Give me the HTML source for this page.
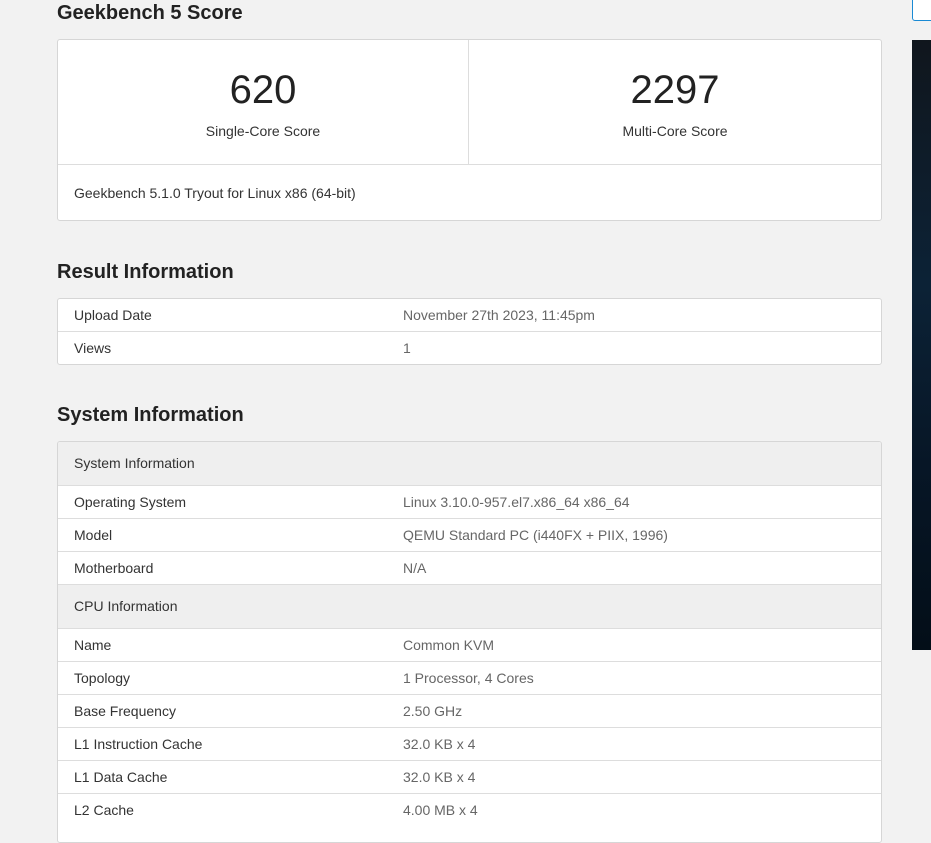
<!DOCTYPE html>
<html><head><style>
body{margin:0;width:931px;height:824px;overflow:hidden;background:#f2f2f2;font-family:"Liberation Sans",Arial,sans-serif;color:#333;position:relative}
.a{position:absolute}
h2{position:absolute;margin:0;font-size:20px;font-weight:bold;color:#222;left:57px}
.panel{position:absolute;left:57px;width:823px;background:#fff;border:1px solid #d6d6d6;border-radius:3px;overflow:hidden}
.row{position:relative;height:32px;border-top:1px solid #ddd;font-size:14px;line-height:32px}
.row:first-child{border-top:none}
.row .l{position:absolute;left:16px}
.row .v{position:absolute;left:345px;color:#666}
.hd{height:43px;line-height:43px;background:#efefef}
</style></head><body>
<h2 style="top:2px">Geekbench 5 Score</h2>
<div class="panel" style="top:39px;height:180px">
  <div class="a" style="left:0;top:0;width:410px;height:124px;border-right:1px solid #ddd;text-align:center">
    <div style="font-size:40px;margin-top:27px;line-height:46px;color:#222">620</div>
    <div style="font-size:14px;margin-top:10px">Single-Core Score</div>
  </div>
  <div class="a" style="left:411px;top:0;width:412px;height:124px;text-align:center">
    <div style="font-size:40px;margin-top:27px;line-height:46px;color:#222">2297</div>
    <div style="font-size:14px;margin-top:10px">Multi-Core Score</div>
  </div>
  <div class="a" style="left:0;top:124px;width:823px;border-top:1px solid #ddd;height:55px;line-height:56px;font-size:14px;padding-left:16px">Geekbench 5.1.0 Tryout for Linux x86 (64-bit)</div>
</div>
<h2 style="top:261px">Result Information</h2>
<div class="panel" style="top:298px">
  <div class="row"><span class="l">Upload Date</span><span class="v">November 27th 2023, 11:45pm</span></div>
  <div class="row"><span class="l">Views</span><span class="v">1</span></div>
</div>
<h2 style="top:404px">System Information</h2>
<div class="panel" style="top:441px;height:400px">
  <div class="row hd"><span class="l">System Information</span></div>
  <div class="row"><span class="l">Operating System</span><span class="v">Linux 3.10.0-957.el7.x86_64 x86_64</span></div>
  <div class="row"><span class="l">Model</span><span class="v">QEMU Standard PC (i440FX + PIIX, 1996)</span></div>
  <div class="row"><span class="l">Motherboard</span><span class="v">N/A</span></div>
  <div class="row hd"><span class="l">CPU Information</span></div>
  <div class="row"><span class="l">Name</span><span class="v">Common KVM</span></div>
  <div class="row"><span class="l">Topology</span><span class="v">1 Processor, 4 Cores</span></div>
  <div class="row"><span class="l">Base Frequency</span><span class="v">2.50 GHz</span></div>
  <div class="row"><span class="l">L1 Instruction Cache</span><span class="v">32.0 KB x 4</span></div>
  <div class="row"><span class="l">L1 Data Cache</span><span class="v">32.0 KB x 4</span></div>
  <div class="row"><span class="l">L2 Cache</span><span class="v">4.00 MB x 4</span></div>
</div>
<div class="a" style="left:912px;top:-3px;width:30px;height:22px;border:1px solid #1a8ad4;border-radius:3px;background:#fff"></div>
<div class="a" style="left:912px;top:40px;width:19px;height:610px;background:linear-gradient(180deg,#10161d 0%,#0c2236 40%,#071626 70%,#030e18 100%)"></div>
</body></html>
